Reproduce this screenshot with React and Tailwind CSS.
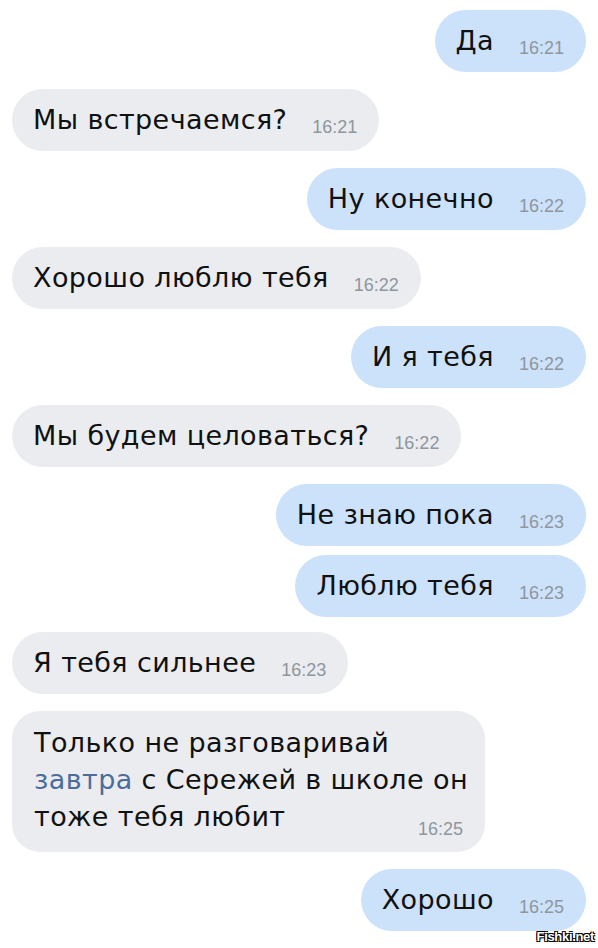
import React from 'react';

const messages = [
  { out: true, text: 'Да', time: '16:21' },
  { out: false, text: 'Мы встречаемся?', time: '16:21' },
  { out: true, text: 'Ну конечно', time: '16:22' },
  { out: false, text: 'Хорошо люблю тебя', time: '16:22' },
  { out: true, text: 'И я тебя', time: '16:22' },
  { out: false, text: 'Мы будем целоваться?', time: '16:22' },
  { out: true, text: 'Не знаю пока', time: '16:23' },
  { out: true, text: 'Люблю тебя', time: '16:23', tight: true },
  { out: false, text: 'Я тебя сильнее', time: '16:23', gap: 'mt-[15px]' },
  { out: false, long: true, time: '16:25' },
  { out: true, text: 'Хорошо', time: '16:25' },
];

const timeCls = 'text-[18px] leading-[20px] tracking-normal text-[#8f969e] font-["Liberation_Sans",Arial,sans-serif]';

const Bubble = ({ msg }) => {
  const color = msg.out ? 'bg-[#cce1fa]' : 'bg-[#eaecef]';

  if (msg.long) {
    return (
      <div className={`${color} rounded-[28px] pl-[22px] pr-[22px] pt-[13px] pb-[17px] leading-[37px] w-[473px] whitespace-nowrap`}>
        <div>Только не разговаривай</div>
        <div>
          <span className="text-[#4a6d9b]">завтра</span> с Сережей в школе он
        </div>
        <div className="flex items-baseline justify-between">
          <span>тоже тебя любит</span>
          <span className={`${timeCls} translate-y-[9px]`}>{msg.time}</span>
        </div>
      </div>
    );
  }

  return (
    <div className={`${color} rounded-full pl-[21px] pr-[22px] py-[15px] leading-[32px] flex items-baseline gap-[25px]`}>
      <span>{msg.text}</span>
      <span className={`${timeCls} translate-y-[4px]`}>{msg.time}</span>
    </div>
  );
};

export default function App() {
  return (
    <div className='relative w-[598px] h-[948px] bg-white overflow-hidden text-[27px] tracking-[0.4px] text-[#111111] font-["DejaVu_Sans",sans-serif]'>
      <div className="flex flex-col pt-[10px] pl-3 pr-[12px]">
        {messages.map((msg, i) => {
          let gap = i === 0 ? '' : 'mt-[17px]';
          if (msg.tight) gap = 'mt-[9px]';
          if (msg.gap) gap = msg.gap;
          return (
            <div key={i} className={`flex ${msg.out ? 'justify-end' : 'justify-start'} ${gap}`}>
              <Bubble msg={msg} />
            </div>
          );
        })}
      </div>

      {/* watermark */}
      <div className='absolute right-[4px] bottom-[2px] text-[13px] font-bold text-white tracking-tight font-["Liberation_Sans",Arial,sans-serif] [text-shadow:1px_1px_0_#000,-1px_-1px_0_#000,1px_-1px_0_#000,-1px_1px_0_#000]'>
        Fishki.net
      </div>
    </div>
  );
}
